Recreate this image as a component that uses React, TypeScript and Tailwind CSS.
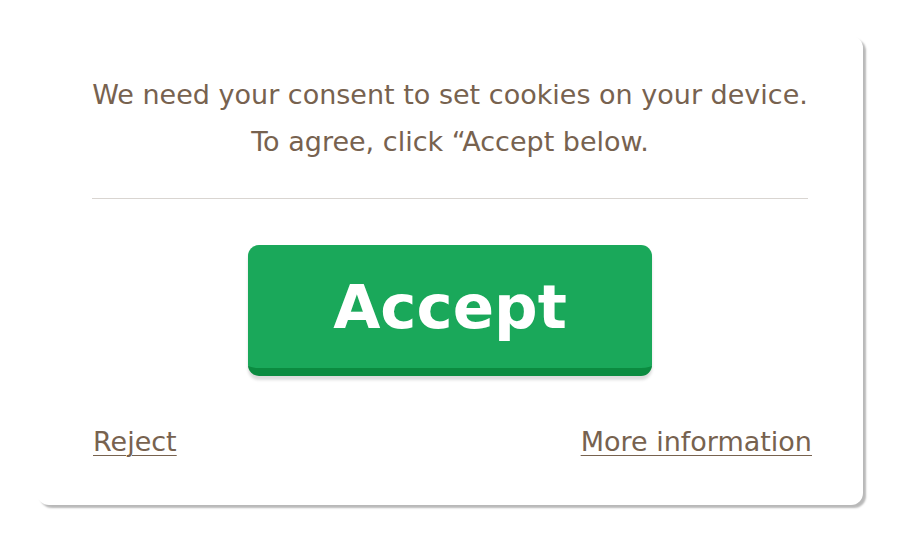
export default function App() {
  return (
    <div className="flex h-[540px] w-[900px] items-start justify-start bg-white font-['DejaVu_Sans',sans-serif]">
      <div className="ml-[37px] mt-[36px] flex h-[469px] w-[826px] flex-col rounded-[12px] bg-white px-[55px] pt-[35px] shadow-[3px_3px_2px_rgba(0,0,0,0.28)]">
        <div className="text-center text-[27px] leading-[47px] text-[#77624f]">
          <p>We need your consent to set cookies on your device.</p>
          <p>To agree, click “Accept below.</p>
        </div>

        <div className="mt-[33px] h-px w-full bg-[#d9d5d1]" />

        <div className="mt-[46px] flex justify-center">
          <button className="h-[131px] w-[404px] rounded-[11px] border-b-[8px] border-[#0b8b40] bg-[#1aa85a] text-[61px] font-bold text-white shadow-[0_4px_3px_rgba(0,0,0,0.14)]">
            Accept
          </button>
        </div>

        <div className="-mr-[4px] ml-[1px] mt-[50px] flex items-center justify-between text-[27px] leading-[32px] text-[#77624f]">
          <a href="#" className="underline decoration-1 underline-offset-[4px]">
            Reject
          </a>
          <a href="#" className="underline decoration-1 underline-offset-[4px]">
            More information
          </a>
        </div>
      </div>
    </div>
  );
}
